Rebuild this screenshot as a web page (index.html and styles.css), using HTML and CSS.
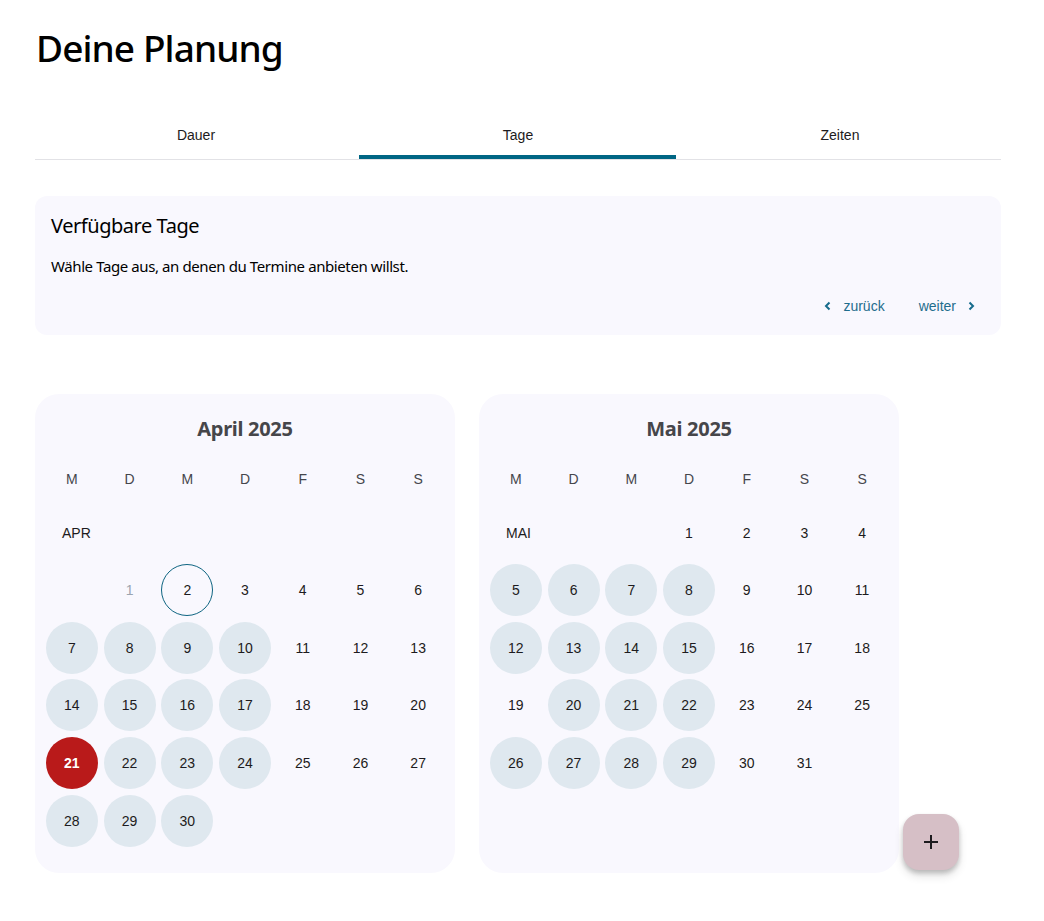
FILE: index.html
```html
<!DOCTYPE html>
<html lang="de">
<head>
<meta charset="utf-8">
<title>Deine Planung</title>
<link rel="stylesheet" href="styles.css">
</head>
<body>
<main class="page">
  <h1 class="title">Deine Planung</h1>

  <nav class="tabs">
    <div class="tab">Dauer</div>
    <div class="tab active">Tage</div>
    <div class="tab">Zeiten</div>
  </nav>

  <section class="info">
    <h2 class="info-title">Verfügbare Tage</h2>
    <p class="info-text">Wähle Tage aus, an denen du Termine anbieten willst.</p>
    <div class="nav-links">
      <a class="nav-link">
        <svg width="8" height="10" viewBox="0 0 8 10"><polyline points="5.5,1.5 2,5 5.5,8.5" fill="none" stroke="currentColor" stroke-width="2"/></svg>
        <span>zurück</span>
      </a>
      <a class="nav-link">
        <span>weiter</span>
        <svg width="8" height="10" viewBox="0 0 8 10"><polyline points="2.5,1.5 6,5 2.5,8.5" fill="none" stroke="currentColor" stroke-width="2"/></svg>
      </a>
    </div>
  </section>

  <div class="calendars">
    <section class="cal">
      <div class="cal-title">April 2025</div>
      <div class="grid weekdays">
        <span>M</span><span>D</span><span>M</span><span>D</span><span>F</span><span>S</span><span>S</span>
      </div>
      <div class="grid label-row"><span class="month-label">APR</span></div>
      <div class="grid days">
        <span></span>
        <span class="day past">1</span>
        <span class="day today">2</span>
        <span class="day">3</span>
        <span class="day">4</span>
        <span class="day">5</span>
        <span class="day">6</span>
        <span class="day sel">7</span>
        <span class="day sel">8</span>
        <span class="day sel">9</span>
        <span class="day sel">10</span>
        <span class="day">11</span>
        <span class="day">12</span>
        <span class="day">13</span>
        <span class="day sel">14</span>
        <span class="day sel">15</span>
        <span class="day sel">16</span>
        <span class="day sel">17</span>
        <span class="day">18</span>
        <span class="day">19</span>
        <span class="day">20</span>
        <span class="day active">21</span>
        <span class="day sel">22</span>
        <span class="day sel">23</span>
        <span class="day sel">24</span>
        <span class="day">25</span>
        <span class="day">26</span>
        <span class="day">27</span>
        <span class="day sel">28</span>
        <span class="day sel">29</span>
        <span class="day sel">30</span>
      </div>
    </section>

    <section class="cal">
      <div class="cal-title">Mai 2025</div>
      <div class="grid weekdays">
        <span>M</span><span>D</span><span>M</span><span>D</span><span>F</span><span>S</span><span>S</span>
      </div>
      <div class="grid days first">
        <span class="month-label">MAI</span>
        <span></span>
        <span></span>
        <span class="day">1</span>
        <span class="day">2</span>
        <span class="day">3</span>
        <span class="day">4</span>
        <span class="day sel">5</span>
        <span class="day sel">6</span>
        <span class="day sel">7</span>
        <span class="day sel">8</span>
        <span class="day">9</span>
        <span class="day">10</span>
        <span class="day">11</span>
        <span class="day sel">12</span>
        <span class="day sel">13</span>
        <span class="day sel">14</span>
        <span class="day sel">15</span>
        <span class="day">16</span>
        <span class="day">17</span>
        <span class="day">18</span>
        <span class="day">19</span>
        <span class="day sel">20</span>
        <span class="day sel">21</span>
        <span class="day sel">22</span>
        <span class="day">23</span>
        <span class="day">24</span>
        <span class="day">25</span>
        <span class="day sel">26</span>
        <span class="day sel">27</span>
        <span class="day sel">28</span>
        <span class="day sel">29</span>
        <span class="day">30</span>
        <span class="day">31</span>
      </div>
    </section>
  </div>
</main>

<button class="fab" aria-label="Hinzufügen">
  <svg width="16" height="16" viewBox="0 0 16 16"><path d="M8 1v14M1 8h14" stroke="#1d1b1e" stroke-width="2" fill="none"/></svg>
</button>
</body>
</html>
```

FILE: styles.css
```css
* { box-sizing: border-box; }

html, body {
  margin: 0;
  padding: 0;
  background: #ffffff;
}

body {
  font-family: "Liberation Sans", Arial, sans-serif;
  color: #1d1b20;
}

.page {
  padding: 0 43px 40px 35px;
}

.title {
  font-family: "Noto Sans", sans-serif;
  font-weight: 500;
  font-size: 37px;
  line-height: 48px;
  margin: 24px 0 0 1px;
  color: #000;
  letter-spacing: -0.9px;
}

.tabs {
  display: grid;
  grid-template-columns: repeat(3, 1fr);
  margin-top: 39px;
  border-bottom: 1px solid #e2e2e6;
}

.tab {
  height: 48px;
  display: flex;
  align-items: center;
  justify-content: center;
  font-size: 14px;
  color: #1d1b20;
  position: relative;
}

.tab.active::after {
  content: "";
  position: absolute;
  left: 2px;
  right: 3px;
  bottom: 0;
  height: 4px;
  background: #006684;
}

.info {
  margin-top: 36px;
  background: #f9f8fe;
  border-radius: 12px;
  padding: 15px 16px 19px 16px;
}

.info-title {
  font-family: "Noto Sans", sans-serif;
  font-weight: 400;
  font-size: 20px;
  line-height: 30px;
  margin: 0;
  color: #000;
  letter-spacing: -0.45px;
}

.info-text {
  font-family: "Noto Sans", sans-serif;
  font-size: 15px;
  line-height: 20px;
  margin: 15px 0 0 0;
  color: #000;
  letter-spacing: -0.4px;
}

.nav-links {
  display: flex;
  justify-content: flex-end;
  gap: 34px;
  margin-top: 20px;
  padding-right: 10px;
}

.nav-link {
  display: flex;
  align-items: center;
  gap: 11px;
  font-size: 14px;
  line-height: 20px;
  color: #1f6d8d;
  cursor: pointer;
}

.nav-link svg { display: block; color: #176c8c; }

.calendars {
  display: grid;
  grid-template-columns: 420px 420px;
  gap: 24px;
  margin-top: 59px;
}

.cal {
  background: #f9f8fe;
  border-radius: 24px;
  padding: 8px 8px 24px 8px;
}

.cal-title {
  height: 54px;
  padding-bottom: 2px;
  display: flex;
  align-items: center;
  justify-content: center;
  font-family: "Noto Sans", sans-serif;
  font-weight: 700;
  font-size: 20px;
  color: #46464a;
  letter-spacing: -0.3px;
}

.grid {
  display: grid;
  grid-template-columns: repeat(7, 1fr);
}

.weekdays {
  height: 46px;
  align-items: center;
  font-size: 14px;
  color: #45464c;
}

.weekdays span { text-align: center; }

.label-row {
  height: 59px;
  align-items: center;
  padding-top: 3px;
}

.month-label {
  font-size: 14px;
  color: #1d1b20;
  padding-left: 19px;
  align-self: center;
}

.days {
  grid-auto-rows: 57.7px;
  align-items: center;
  justify-items: center;
}

.days.first {
  grid-template-rows: 59px;
}

.days.first > :nth-child(-n+7) {
  margin-top: 3px;
}

.days.first .month-label {
  justify-self: start;
}

.day {
  width: 52px;
  height: 52px;
  border-radius: 50%;
  display: flex;
  align-items: center;
  justify-content: center;
  font-size: 14px;
  color: #1d1b20;
}

.day.past { color: #9ba4b0; }

.day.today {
  border: 1px solid #0f6582;
}

.day.sel { background: #dfe8ef; }

.day.active {
  background: #b91a1a;
  color: #ffffff;
  font-weight: 700;
}

.fab {
  position: fixed;
  right: 85px;
  bottom: 51px;
  width: 56px;
  height: 56px;
  border: none;
  border-radius: 16px;
  background: #d6bfc6;
  display: flex;
  align-items: center;
  justify-content: center;
  box-shadow: 0 3px 5px rgba(0,0,0,0.2), 0 6px 10px rgba(0,0,0,0.12);
  padding: 0;
}
```
